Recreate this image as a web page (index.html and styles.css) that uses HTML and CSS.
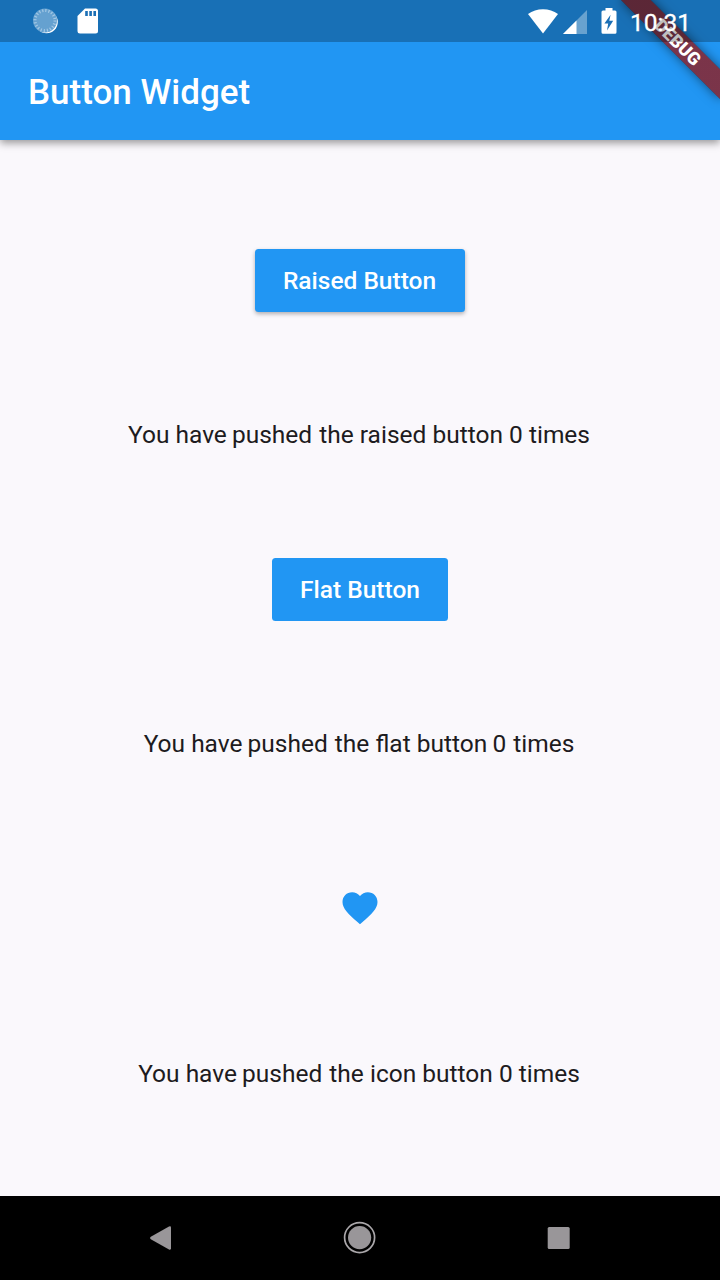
FILE: index.html
```html
<!DOCTYPE html>
<html lang="en">
<head>
<meta charset="utf-8">
<title>Button Widget</title>
<link rel="stylesheet" href="styles.css">
</head>
<body>
<div class="screen">
  <div class="banner-clip"><div class="banner">DEBUG</div></div>
  <div class="status-bar">
    <svg class="status-sync" width="28" height="28" viewBox="0 0 28 28">
      <circle cx="14.500" cy="14" r="11.300" fill="#fff"/>
      <circle cx="13" cy="12.500" r="12" fill="#65a1d0"/>
      <circle cx="13" cy="12.500" r="10" fill="none" stroke="#a3c8e5" stroke-width="3" stroke-dasharray="1.2 1.94"/>
    </svg>
    <svg class="status-card" width="22" height="26" viewBox="0 0 22 26">
      <path fill="#fff" d="M8 0.5H18.5Q21 .5 21 3V23Q21 25.500 18.500 25.500H3Q.5 25.500 .5 23V8Z"/>
      <path fill="#1b6fb5" d="M8.200 3h2.600v5H8.200zM12.300 3h2.600v5h-2.600zM16.400 3H19v5h-2.600z"/>
    </svg>
    <svg class="status-wifi" width="30" height="25" viewBox="0 0 30 25"><path fill="#fff" d="M0 5Q6.500 .3 15 .3T30 5L15 24.500Z"/></svg>
    <svg class="status-cell" width="24" height="24" viewBox="0 0 24 24"><path fill="#fff" fill-opacity=".35" d="M24 0V24H0Z"/><path fill="#fff" d="M13.500 10.500V24H0Z"/></svg>
    <svg class="status-battery" width="16" height="26" viewBox="0 0 16 26"><path fill="#fff" d="M4.500 0h7v2.500H14Q15.500 2.500 15.500 4V24.300Q15.500 25.800 14 25.800H2Q.5 25.800 .5 24.300V4Q.5 2.500 2 2.500h2.500Z"/><path fill="#1b6fb5" d="M9.600 6.700 3.400 15.500H7.200L6 22.500 12.200 12.800H8.300Z"/></svg>
    <span class="clock">10:31</span>
  </div>
  <header class="app-bar"><h1 class="title">Button Widget</h1></header>
  <main class="content">
    <div class="slot"><button class="button raised">Raised Button</button></div>
    <p class="message">You <span class="tight">have</span> <span class="loose">pushed</span> the raised button 0 times</p>
    <div class="slot"><button class="button flat">Flat Button</button></div>
    <p class="message">You <span class="tight">have</span> <span class="loose">pushed</span> the flat <span class="tight">button</span> <span class="loose">0</span> times</p>
    <div class="slot icon-slot">
      <svg width="42" height="42" viewBox="0 0 24 24"><path fill="#2196f3" d="M12 21.350l-1.450-1.320C5.400 15.360 2 12.280 2 8.500 2 5.420 4.420 3 7.500 3c1.740 0 3.410.81 4.500 2.090C13.090 3.810 14.760 3 16.500 3 19.580 3 22 5.420 22 8.500c0 3.780-3.400 6.860-8.550 11.540L12 21.350z"/></svg>
    </div>
    <p class="message">You <span class="tight">have</span> <span class="loose">pushed</span> the icon button 0 times</p>
  </main>
  <nav class="nav-bar">
    <svg width="34" height="34" viewBox="0 0 34 34"><path fill="#999699" d="M7.800 15.800 26 5.600Q28 4.800 28 6.800V27.200Q28 29.200 26 28.400L7.800 18.200Q6 17 7.800 15.800Z"/></svg>
    <svg width="34" height="34" viewBox="0 0 34 34"><circle cx="16.600" cy="16.600" r="11.600" fill="#999699"/><circle cx="16.600" cy="16.600" r="15" fill="none" stroke="#aaa7aa" stroke-width="1.700"/></svg>
    <svg width="34" height="34" viewBox="0 0 34 34"><rect x="5.700" y="6" width="22" height="22" rx="1.500" fill="#999699"/></svg>
  </nav>
</div>
</body>
</html>
```
FILE: styles.css
```css
* { box-sizing: border-box; }
body { margin: 0; font-family: Roboto, sans-serif; }
.screen {
  position: relative;
  display: flex;
  flex-direction: column;
  width: 720px;
  height: 1280px;
  overflow: hidden;
  background: #faf8fc;
}
.status-bar {
  position: relative;
  z-index: 3;
  display: flex;
  align-items: flex-start;
  height: 42px;
  padding: 8px 29px 0 32px;
  background: rgba(0, 0, 0, .25);
}
.status-card { margin-left: 17px; }
.status-wifi { margin: 1px 0 0 auto; }
.status-cell { margin: 2px 0 0 5px; }
.status-battery { margin-left: 14px; }
.clock {
  width: 61px;
  margin-left: 13px;
  color: #fff;
  font-size: 24.500px;
  line-height: 29px;
  text-align: right;
  -webkit-text-stroke: .3px #fff;
}
.app-bar {
  position: relative;
  z-index: 1;
  height: 140px;
  margin-top: -42px;
  padding: 45px 28px 0;
  display: flex;
  align-items: center;
  background: #2196f3;
  box-shadow: 0 3px 8px rgba(0, 0, 0, .4);
}
.title {
  margin: 0;
  color: #fff;
  font-size: 35px;
  font-weight: 500;
  line-height: 42px;
}
.banner-clip {
  position: absolute;
  z-index: 2;
  top: 0;
  right: 0;
  width: 180px;
  height: 140px;
  overflow: hidden;
}
.banner {
  position: absolute;
  top: 49px;
  left: 110px;
  width: 140px;
  height: 21px;
  color: #fff;
  background: linear-gradient(rgba(183, 28, 28, .627), rgba(183, 28, 28, .627)), rgba(0, 0, 0, .38);
  box-shadow: 0 0 11px rgba(0, 0, 0, .5);
  font-size: 17.850px;
  font-weight: 900;
  line-height: 21px;
  text-align: center;
  transform: rotate(45deg);
  transform-origin: 70px -49px;
}
.content {
  flex: 1;
  display: flex;
  flex-direction: column;
  align-items: center;
  gap: 98.400px;
  padding-top: 98.500px;
}
.slot { display: flex; align-items: center; height: 84px; }
.icon-slot { height: 105.200px; }
.icon-slot svg { margin-bottom: 1px; }
.button {
  height: 63px;
  padding: 0 1px 0 0;
  border: 0;
  border-radius: 3.500px;
  background: #2196f3;
  color: #fff;
  font: 500 24.500px/29px Roboto, sans-serif;
}
.raised {
  width: 210px;
  box-shadow: 0 2px 4px rgba(0, 0, 0, .3);
}
.flat { width: 176px; padding: 0; }
.message {
  margin: 0;
  height: 28px;
  padding-right: 2px;
  color: #1d1b20;
  font-size: 24.500px;
  line-height: 28px;
  white-space: nowrap;
}
.tight { margin-right: -1px; }
.loose { margin-right: 1px; }
.nav-bar {
  display: flex;
  justify-content: space-between;
  align-items: center;
  height: 84px;
  padding: 0 144px 0 143px;
  background: #000;
}
```
